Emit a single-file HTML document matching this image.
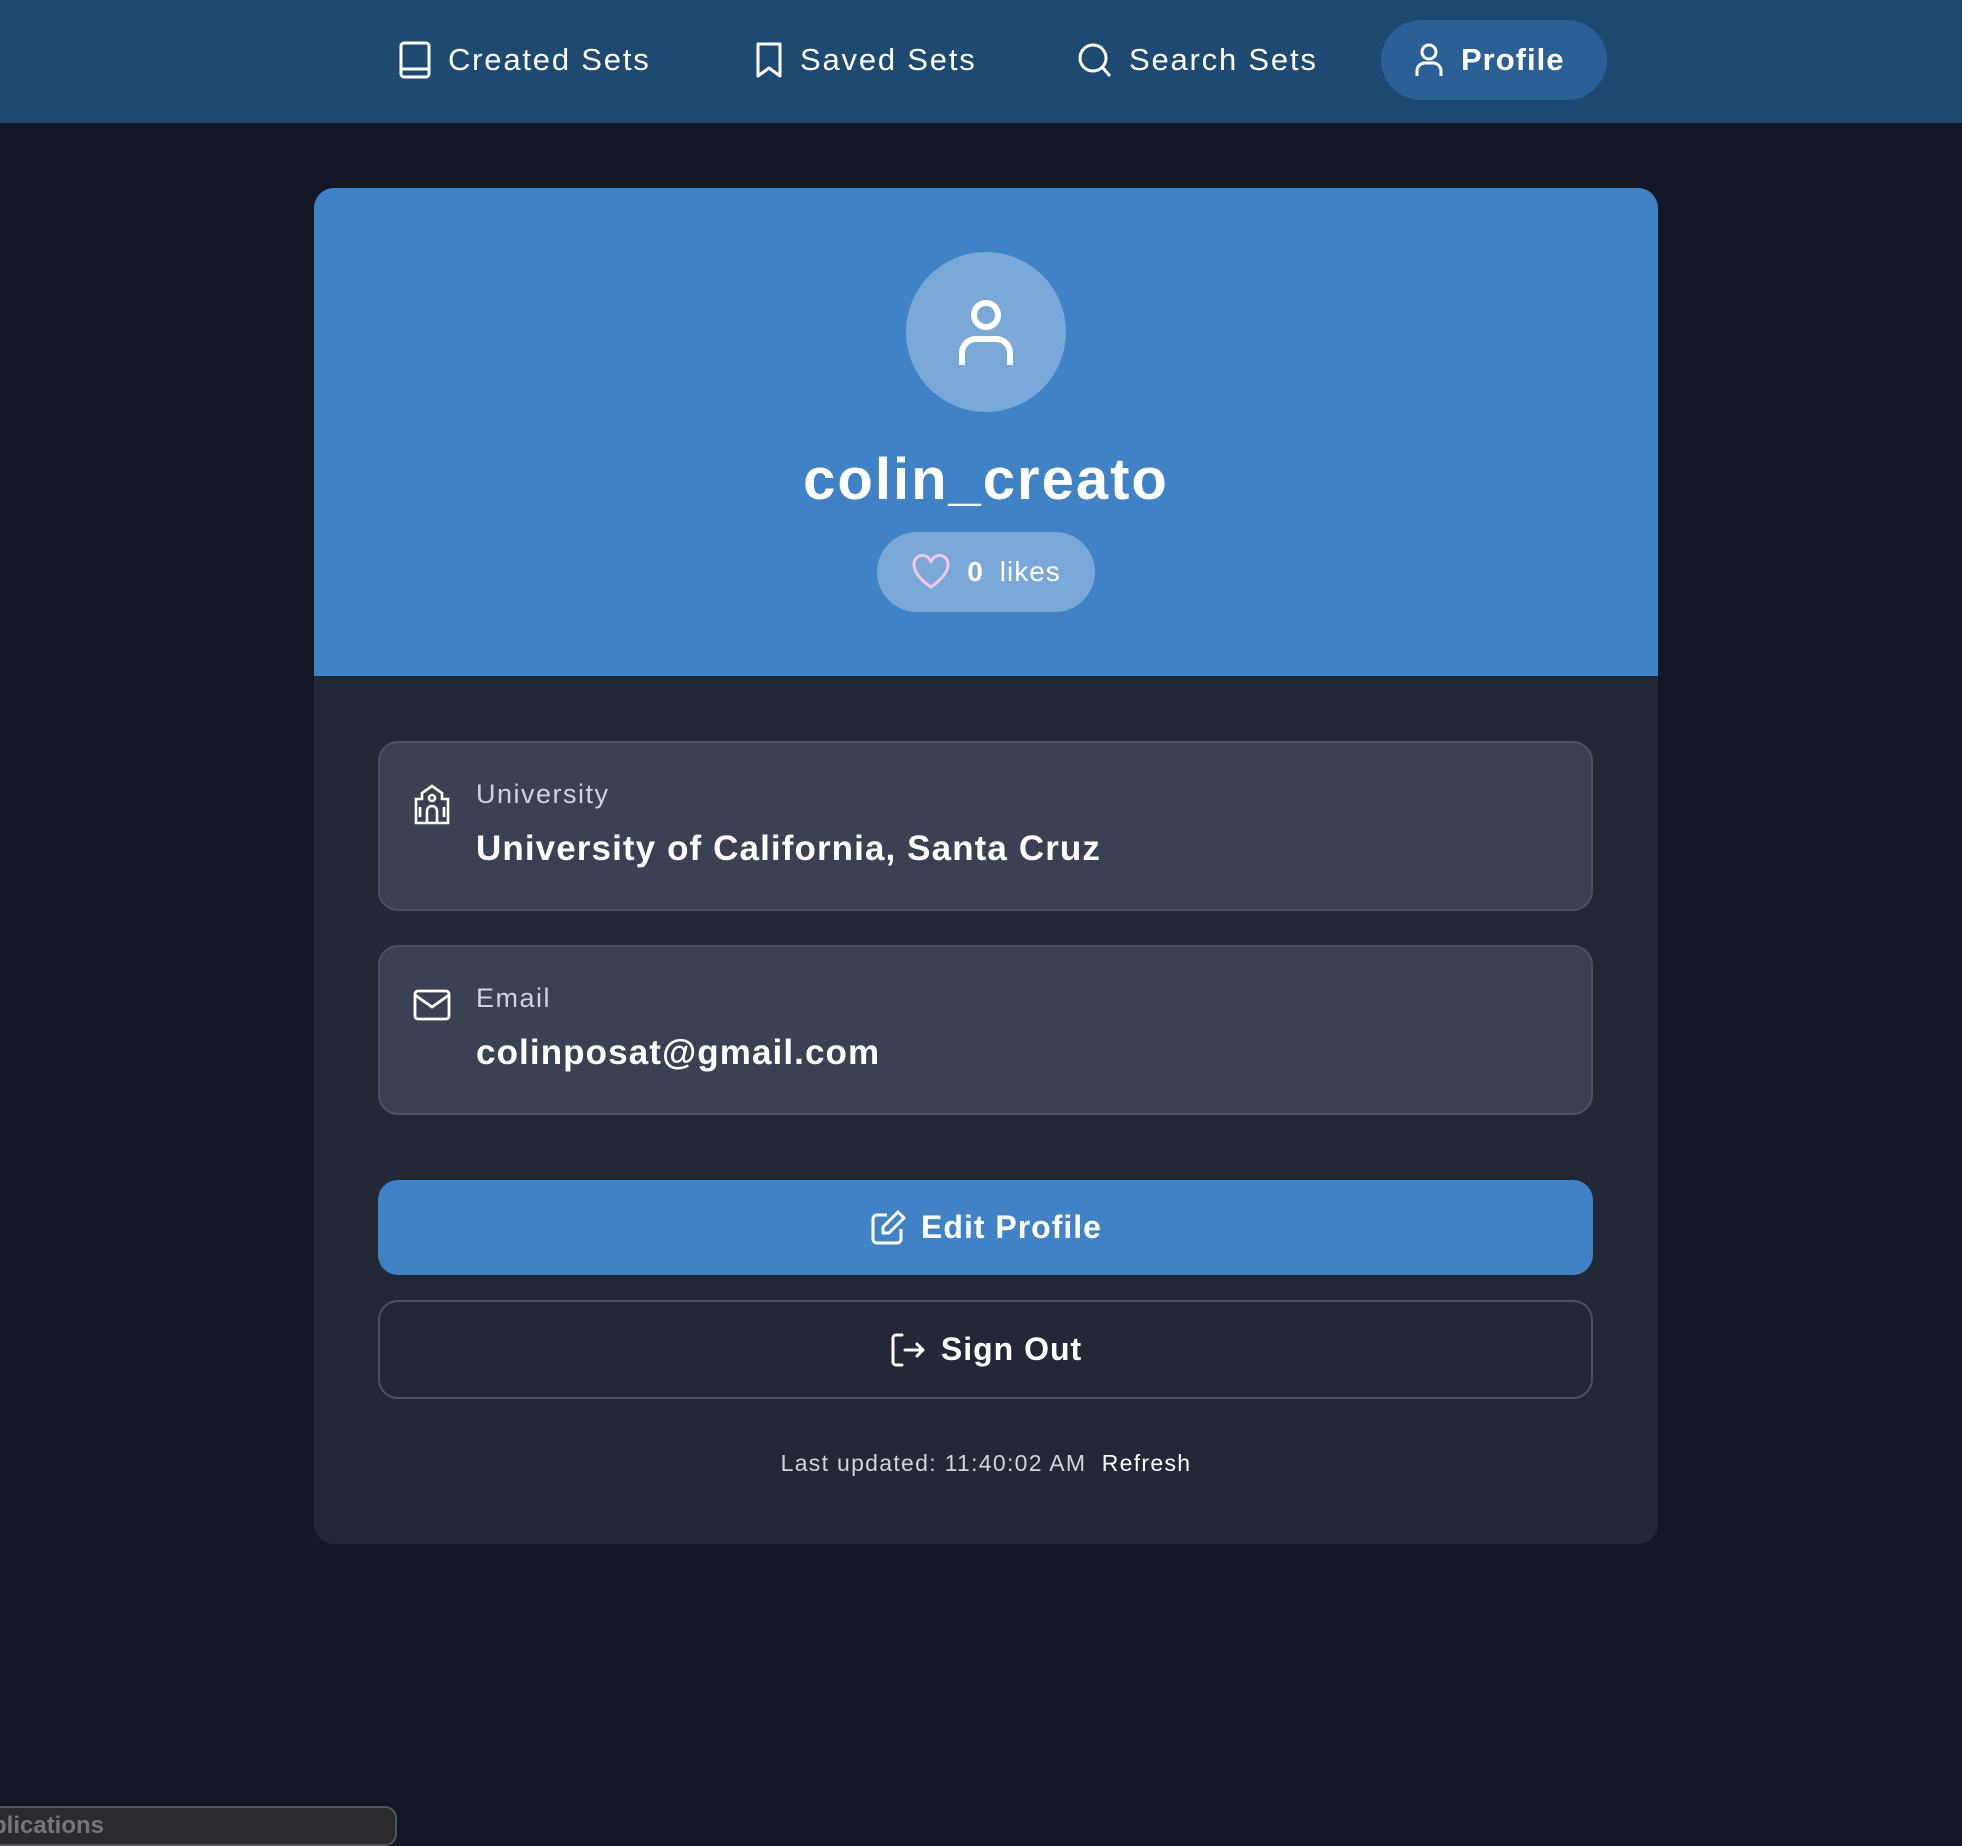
<!DOCTYPE html>
<html><head><style>
*{box-sizing:border-box;margin:0;padding:0}
body{width:1962px;height:1834px;background:#121826;font-family:"Liberation Sans",sans-serif;color:#fff;position:relative;overflow:hidden}
.nav{position:absolute;left:0;top:0;width:1962px;height:123px;background:#1e4a72}
.ni{position:absolute;top:20px;height:80px;display:flex;align-items:center;font-size:31px;color:#fff;letter-spacing:1.8px}
.ni svg{margin-right:16px}
.pill{background:#2a6096;border-radius:40px;padding:0 32px;font-weight:bold}
.card{position:absolute;left:314px;top:188px;width:1344px;height:1356px;background:#222836;border-radius:20px;overflow:hidden}
.hdr{height:488px;background:#3f83c6;position:relative}
.av{position:absolute;left:592px;top:64px;width:160px;height:160px;border-radius:50%;background:#7aa8d8;display:flex;align-items:center;justify-content:center}
.un{position:absolute;left:0;width:100%;top:258px;text-align:center;font-size:58px;font-weight:bold;letter-spacing:2px}
.likes{position:absolute;left:563px;top:344px;width:218px;height:80px;border-radius:40px;background:#7aa8d8;display:flex;align-items:center;justify-content:center;font-size:28px;letter-spacing:1px}
.box{position:absolute;left:64px;width:1215px;height:170px;background:#3a4152;border:2px solid #4b5264;border-radius:20px}
.box svg{position:absolute;left:32px;top:40px}
.lbl{position:absolute;left:96px;top:36px;font-size:27px;color:#d0d4dc;letter-spacing:1.5px}
.val{position:absolute;left:96px;top:86px;font-size:35px;font-weight:bold;letter-spacing:1.1px}
.btn{position:absolute;left:64px;width:1215px;border-radius:20px;display:flex;align-items:center;justify-content:center;font-size:32px;font-weight:bold;letter-spacing:1px}
.btn svg{margin-right:14px}
</style></head><body>
<div class="nav">
<div class="ni" style="left:398px"><svg width="34" height="40" viewBox="0 0 34 40" fill="none" stroke="#fff" stroke-width="3"><rect x="3" y="3" width="28" height="34" rx="3"/><path d="M3 29h28"/></svg>Created Sets</div>
<div class="ni" style="left:754px"><svg width="30" height="40" viewBox="0 0 30 40" fill="none" stroke="#fff" stroke-width="3" stroke-linejoin="round"><path d="M4 4h22v32l-11-8-11 8z"/></svg>Saved Sets</div>
<div class="ni" style="left:1077px"><svg width="36" height="40" viewBox="0 0 36 40" fill="none" stroke="#fff" stroke-width="3"><circle cx="16" cy="18" r="13"/><path d="M26 28l7 8"/></svg>Search Sets</div>
<div class="ni pill" style="left:1381px;width:226px;letter-spacing:1px"><svg width="32" height="40" viewBox="0 0 32 40" fill="none" stroke="#fff" stroke-width="3"><circle cx="16" cy="12" r="7"/><path d="M4 36v-5a8 8 0 0 1 8-8h8a8 8 0 0 1 8 8v5"/></svg>Profile</div>
</div>
<div class="card">
<div class="hdr">
<div class="av"><svg width="60" height="70" viewBox="0 0 60 70" fill="none" stroke="#fff" stroke-width="6"><circle cx="30" cy="18" r="12"/><path d="M6 68v-12a14 14 0 0 1 14-14h20a14 14 0 0 1 14 14v12"/></svg></div>
<div class="un">colin_creato</div>
<div class="likes"><svg width="40" height="36" viewBox="0 0 40 36" fill="none" stroke="#f5c6e4" stroke-width="3"><path d="M20 33S3 22 3 11a8.5 8.5 0 0 1 17-2 8.5 8.5 0 0 1 17 2c0 11-17 22-17 22z"/></svg><b style="margin:0 16px 0 16px">0</b>likes</div>
</div>
<div class="box" style="top:553px"><svg width="40" height="42" viewBox="0 0 40 42" fill="none" stroke="#fff" stroke-width="2.6"><path d="M20 3l10 7v6h6v24H4V16h6v-6z"/><circle cx="20" cy="15" r="3"/><path d="M15 40V28a5 5 0 0 1 10 0v12M8 24v10M32 24v10"/></svg><div class="lbl">University</div><div class="val">University of California, Santa Cruz</div></div>
<div class="box" style="top:757px"><svg width="40" height="36" viewBox="0 0 40 36" fill="none" stroke="#fff" stroke-width="2.8"><rect x="3" y="4" width="34" height="28" rx="3"/><path d="M3 8l17 12 17-12"/></svg><div class="lbl">Email</div><div class="val">colinposat@gmail.com</div></div>
<div class="btn" style="top:992px;height:95px;background:#3f83c6"><svg width="38" height="38" viewBox="0 0 38 38" fill="none" stroke="#fff" stroke-width="3" stroke-linejoin="round"><path d="M18 6H8a4 4 0 0 0-4 4v20a4 4 0 0 0 4 4h20a4 4 0 0 0 4-4V20"/><path d="M29 3l6 6-15 15h-6v-6z"/></svg>Edit Profile</div>
<div class="btn" style="top:1112px;height:99px;border:2px solid #4b5264"><svg width="38" height="38" viewBox="0 0 38 38" fill="none" stroke="#fff" stroke-width="3" stroke-linecap="round" stroke-linejoin="round"><path d="M13 4H7a3 3 0 0 0-3 3v24a3 3 0 0 0 3 3h6M16 19h18M28 13l6 6-6 6"/></svg>Sign Out</div>
<div style="position:absolute;top:1262px;width:100%;text-align:center;font-size:23px;color:#d0d4dc;letter-spacing:1.3px">Last updated: 11:40:02 AM&nbsp;&nbsp;<span style="color:#fff">Refresh</span></div>
</div>
<div style="position:absolute;left:-10px;top:1806px;width:407px;height:40px;background:#2a2b2e;border:2px solid #555;border-radius:12px;color:#777;font-size:24px;font-weight:bold;padding:4px 0 0 0">plications</div>
</body></html>
